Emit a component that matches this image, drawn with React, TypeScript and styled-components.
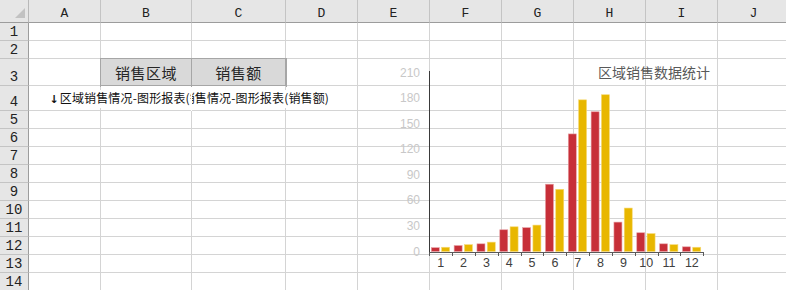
import styled, { createGlobalStyle } from "styled-components";

const GlobalStyle = createGlobalStyle`
  html, body {
    margin: 0;
    padding: 0;
    background: #fff;
    overflow: hidden;
  }
  * { box-sizing: border-box; }
`;

const columns = ["A", "B", "C", "D", "E", "F", "G", "H", "I", "J"];
const rowHeights = [18, 18, 27, 25, 18, 18, 18, 18, 18, 18, 18, 18, 18, 18];

const redData = [4.5, 7, 9, 25.5, 28, 79, 138, 164, 34.5, 22, 9, 5.5];
const yellowData = [5, 8, 11, 29, 31, 73, 178, 184, 51, 21, 8, 5];

export default function App() {
  return (
    <>
      <GlobalStyle />
      <Sheet>
        <Corner />
        {columns.map((c) => (
          <ColHeader key={c}>{c}</ColHeader>
        ))}
        {rowHeights.map((_, r) => (
          <Row key={r} index={r + 1} />
        ))}
        <Chart />
      </Sheet>
    </>
  );
}

function Row({ index }: { index: number }) {
  return (
    <>
      <RowHeader>{index}</RowHeader>
      {columns.map((c) => {
        if (index === 3 && (c === "B" || c === "C")) {
          return (
            <FieldCell key={c}>{c === "B" ? "销售区域" : "销售额"}</FieldCell>
          );
        }
        if (index === 4 && (c === "B" || c === "C")) {
          return (
            <SpillCell key={c} $clip={c === "B" ? "right" : "left"}>
              <SpillText>
                <Arrow>↓</Arrow>区域销售情况-图形报表({c === "B" ? "销售区域" : "销售额"})
              </SpillText>
            </SpillCell>
          );
        }
        return <Cell key={c} />;
      })}
    </>
  );
}

function Chart() {
  const x0 = 429.3;
  const step = 22.83;
  const base = 251.5;
  const k = 0.852;
  const ticks = [0, 30, 60, 90, 120, 150, 180, 210];
  return (
    <ChartLayer width={786} height={290}>
      {ticks.map((t) => (
        <text
          key={t}
          x={420}
          y={base - t * k + 4}
          textAnchor="end"
          fontSize={12}
          fill="#c8c8c8"
          fontFamily="'Liberation Sans', Arial, sans-serif"
        >
          {t}
        </text>
      ))}
      <text
        x={598}
        y={77.5}
        fontSize={14}
        fill="#595959"
        fontFamily="'Noto Sans CJK SC', sans-serif"
      >
        区域销售数据统计
      </text>
      {redData.map((v, i) => {
        const left = x0 + i * step;
        const y = yellowData[i];
        return (
          <g key={i}>
            <rect
              x={left + 2}
              y={base - v * k}
              width={8}
              height={v * k}
              fill="#c72f38"
              stroke="#e7a0a4"
              strokeWidth={0.6}
            />
            <rect
              x={left + 12.3}
              y={base - y * k}
              width={8}
              height={y * k}
              fill="#e8b700"
              stroke="#f6d977"
              strokeWidth={0.6}
            />
            <text
              x={left + step / 2}
              y={267}
              textAnchor="middle"
              fontSize={12.5}
              fill="#404040"
              fontFamily="'Liberation Sans', Arial, sans-serif"
            >
              {i + 1}
            </text>
          </g>
        );
      })}
      <line x1={429.5} y1={71} x2={429.5} y2={253} stroke="#3a3a3a" strokeWidth={1} />
      <line x1={429} y1={252.5} x2={704} y2={252.5} stroke="#595959" strokeWidth={1} />
      {Array.from({ length: 13 }).map((_, i) => (
        <line
          key={i}
          x1={Math.round(x0 + i * step) + 0.5}
          y1={252}
          x2={Math.round(x0 + i * step) + 0.5}
          y2={256}
          stroke="#595959"
          strokeWidth={1}
        />
      ))}
    </ChartLayer>
  );
}

const Sheet = styled.div`
  position: relative;
  display: grid;
  grid-template-columns: 29px 72px 91px 94px repeat(7, 72px);
  grid-template-rows: 23px ${rowHeights.map((h) => `${h}px`).join(" ")};
  width: 790px;
  height: 290px;
  overflow: hidden;
  font-family: "Noto Sans CJK SC", "Liberation Sans", sans-serif;
`;

const Corner = styled.div`
  position: relative;
  background: #e6e6e6;
  border-right: 1px solid #b8b8b8;
  border-bottom: 1px solid #9c9c9c;

  &::after {
    content: "";
    position: absolute;
    right: 3px;
    bottom: 4px;
    width: 10px;
    height: 10px;
    background: #c2c2c2;
    clip-path: polygon(100% 0, 100% 100%, 0 100%);
  }
`;

const ColHeader = styled.div`
  display: flex;
  align-items: flex-end;
  justify-content: center;
  background: #e6e6e6;
  border-right: 1px solid #c4c4c4;
  border-bottom: 1px solid #9c9c9c;
  font-family: "Liberation Mono", monospace;
  font-size: 13px;
  line-height: 15px;
  color: #222;
  padding-bottom: 1px;
`;

const RowHeader = styled.div`
  display: flex;
  align-items: flex-end;
  justify-content: center;
  background: #e6e6e6;
  border-right: 1px solid #9c9c9c;
  border-bottom: 1px solid #c4c4c4;
  font-family: "Liberation Mono", monospace;
  font-size: 14px;
  line-height: 16px;
  color: #222;
`;

const Cell = styled.div`
  background: #fff;
  border-right: 1px solid #d4d4d4;
  border-bottom: 1px solid #d4d4d4;
`;

const FieldCell = styled(Cell)`
  display: flex;
  align-items: center;
  justify-content: center;
  background: #d9d9d9;
  outline: 1px solid #a6a6a6;
  border-color: #a6a6a6;
  font-size: 15px;
  color: #262626;
  letter-spacing: 0.5px;
  position: relative;
  z-index: 1;
`;

const SpillCell = styled(Cell)<{ $clip: "left" | "right" }>`
  position: relative;
  z-index: 1;
  display: flex;
  align-items: flex-end;
  justify-content: center;
  white-space: nowrap;
  padding-bottom: 2px;
  clip-path: ${(p) =>
    p.$clip === "right" ? "inset(0 1px 0 -400px)" : "inset(0 -400px 0 0)"};
`;

const SpillText = styled.span`
  background: #fff;
  font-size: 12px;
  line-height: 16px;
  letter-spacing: 0.15px;
  color: #111;
`;

const Arrow = styled.span`
  font-family: "DejaVu Sans", sans-serif;
  font-weight: bold;
  font-size: 11px;
  margin-right: 1px;
`;

const ChartLayer = styled.svg`
  position: absolute;
  left: 0;
  top: 0;
  pointer-events: none;
  z-index: 2;
`;
